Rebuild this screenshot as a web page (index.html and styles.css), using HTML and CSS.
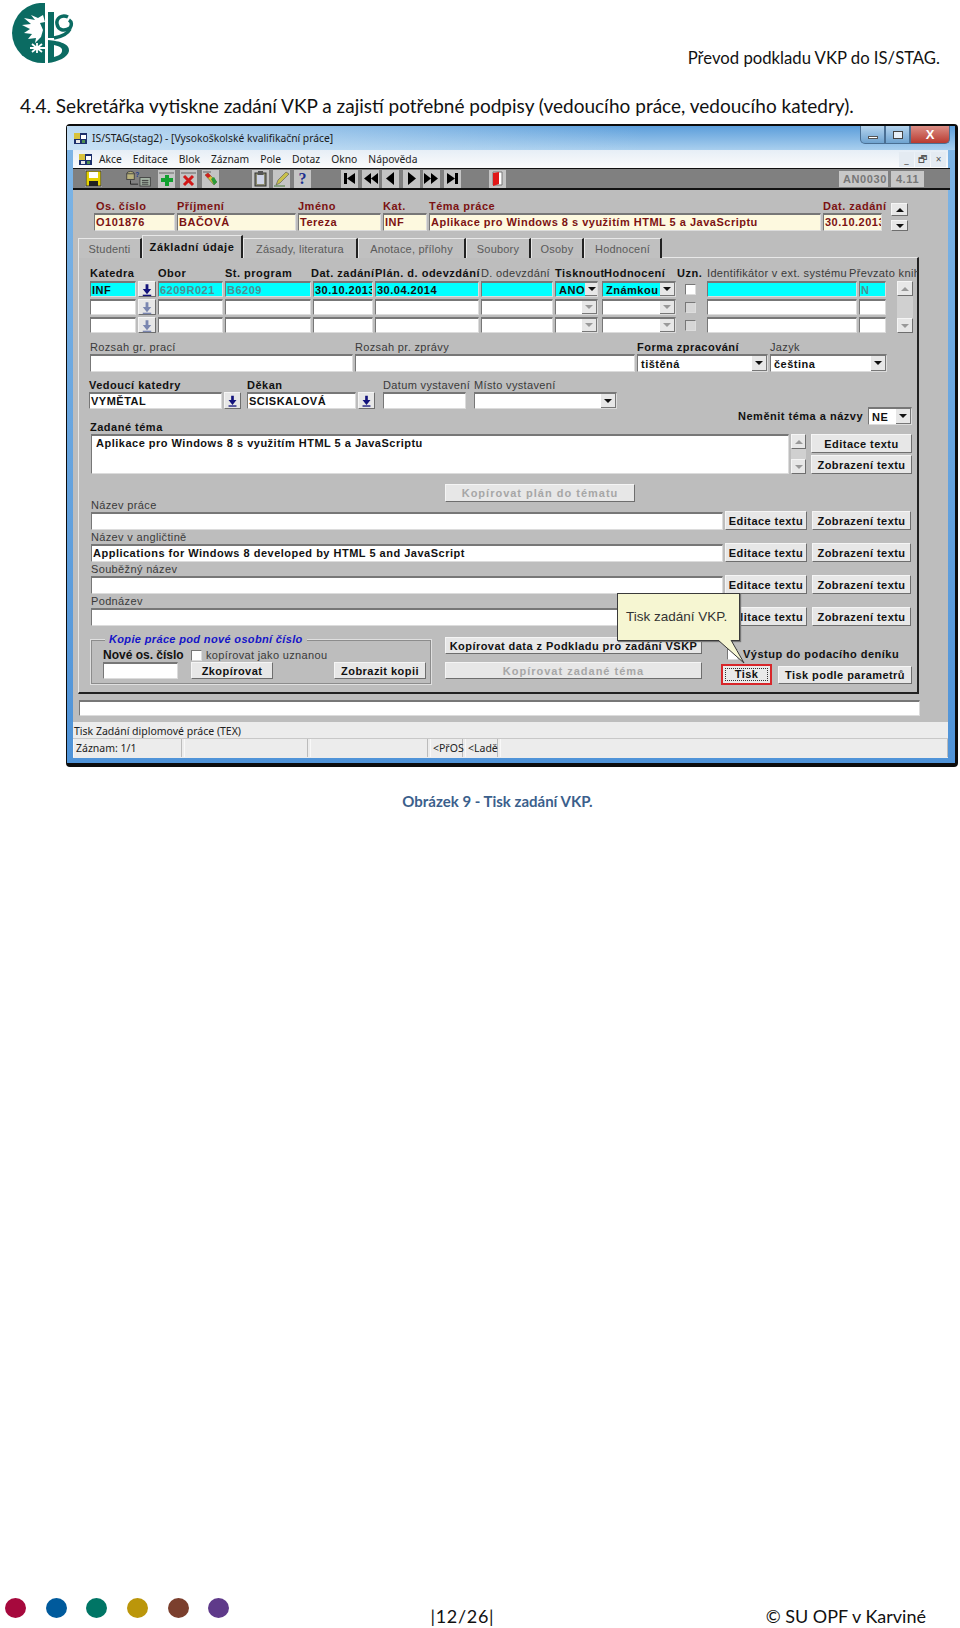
FILE: index.html
```html
<!DOCTYPE html>
<html lang="cs">
<head>
    <meta charset="UTF-8">
    <meta name="viewport" content="width=device-width, initial-scale=1.0">
    <title>Převod podkladu VKP do IS/STAG</title>
    <link rel="stylesheet" href="styles.css">
</head>
<body>
    <svg class="defs" width="0" height="0">
        <symbol id="lov" viewBox="0 0 17 17">
            <path d="M7 3h3v5h3l-4.500 5.500L4 8h3z" fill="currentColor"/>
            <rect x="4" y="14" width="9" height="1.500" fill="currentColor"/>
        </symbol>
        <symbol id="appicon" viewBox="0 0 15 15">
            <rect x="1" y="2" width="13" height="11" fill="#1c2f6b"/>
            <rect x="1" y="2" width="6" height="6" fill="#d8c23c"/>
            <rect x="8" y="4" width="5" height="4" fill="#fff"/>
            <rect x="3" y="9" width="4" height="3" fill="#e8e8e8"/>
            <rect x="9" y="9" width="3" height="3" fill="#4f8f4f"/>
        </symbol>
    </svg>

    <header class="doc-head">
        <svg class="logo" viewBox="0 0 62 62" width="62" height="62">
            <path d="M33 0A30.500 30.500 0 0 0 0 30A30.500 30.500 0 0 0 33 60Z" fill="#0b6b62"/>
            <path d="M31 12L26 15L19 12L23 17L12 15L19 21L10 22L18 26L12 30L20 31L16 36L24 35L23 40L29 34L31 27L28 20L33 19Z" fill="#fff"/>
            <path d="M18 45H33M25 40V50M20 41L30 49M30 41L20 49" stroke="#fff" stroke-width="1.800"/>
            <rect x="36" y="9" width="6" height="26" fill="#0b6b62"/>
            <path d="M56 14C50 11 44 15 45 21C46 27 52 29 58 25C60 22 60 19 57 17" fill="none" stroke="#0b6b62" stroke-width="3.500"/>
            <path d="M58 26C55 32 48 34 42 35" fill="none" stroke="#0b6b62" stroke-width="3.500"/>
            <path d="M36 37C48 38 58 41 57 48C56 54 46 59 36 60ZM42 42V54C46 53 50 51 50 48C51 45 47 43 42 42Z" fill="#0b6b62" fill-rule="evenodd"/>
        </svg>
        <p class="doc-title">Převod podkladu VKP do IS/STAG.</p>
    </header>

    <h1 class="step">4.4. Sekretářka vytiskne zadání VKP a zajistí potřebné podpisy (vedoucího práce, vedoucího katedry).</h1>

    <figure class="shot">
        <div class="window">
            <div class="titlebar">
                <svg class="app-ico" width="15" height="15"><use href="#appicon"/></svg>
                <span>IS/STAG(stag2) - [Vysokoškolské kvalifikační práce]</span>
                <div class="winbtns">
                    <span class="winbtn"><i class="ico-min"></i></span>
                    <span class="winbtn"><i class="ico-max"></i></span>
                    <span class="winbtn close">X</span>
                </div>
            </div>

            <nav class="menubar">
                <svg class="app-ico" width="15" height="15"><use href="#appicon"/></svg>
                <span>Akce</span>
                <span>Editace</span>
                <span>Blok</span>
                <span>Záznam</span>
                <span>Pole</span>
                <span>Dotaz</span>
                <span>Okno</span>
                <span>Nápověda</span>
                <div class="mdi-btns"><span>_</span><span>&#x1F5D7;&#xFE0E;</span><span>×</span></div>
            </nav>

            <div class="toolbar">
                <div class="tb-group tb-save">
                    <svg class="tb-ico" viewBox="0 0 17 17"><rect x="1" y="1" width="15" height="15" fill="#e6d200" stroke="#333"/><rect x="4" y="2" width="9" height="6" fill="#fff"/><rect x="4" y="11" width="9" height="5" fill="#222"/></svg>
                </div>
                <div class="tb-group tb-edit">
                    <svg class="tb-ico wide" viewBox="0 0 28 18"><ellipse cx="5" cy="4" rx="4" ry="2.500" fill="#b9b27a" stroke="#444"/><rect x="1" y="4" width="8" height="6" fill="#b9b27a" stroke="#444"/><text x="10" y="7" font-size="7" font-weight="bold" fill="#223a8a" font-family="Liberation Sans">?</text><path d="M5 11V15H13" stroke="#222" fill="none"/><rect x="15" y="8" width="11" height="9" fill="#a8b8a8" stroke="#444"/><path d="M17 11H24M17 13H24M17 15H24" stroke="#333"/></svg>
                    <span class="tb-btn"><svg class="tb-ico" viewBox="0 0 17 17"><path d="M1 3H16" stroke="#666"/><path d="M7 5h4v3h4v4h-4v4H7v-4H3V8h4z" fill="#12a030"/></svg></span>
                    <span class="tb-btn"><svg class="tb-ico" viewBox="0 0 17 17"><path d="M1 3H16" stroke="#666"/><path d="M4 6L13 15M13 6L4 15" stroke="#d01818" stroke-width="3"/></svg></span>
                    <span class="tb-btn"><svg class="tb-ico" viewBox="0 0 17 17"><path d="M1 2H9" stroke="#666"/><path d="M3 5L6 3L15 12L12 15Z" fill="#d8c23c" stroke="#444" stroke-width=".5"/><path d="M3 5L6 3L9 6L6 8Z" fill="#d02020"/><path d="M9 9L12 7L15 12L12 15Z" fill="#2a9a3a"/></svg></span>
                </div>
                <div class="tb-group tb-tools">
                    <span class="tb-btn"><svg class="tb-ico" viewBox="0 0 17 17"><rect x="3" y="3" width="11" height="13" fill="#8a8a72" stroke="#333"/><rect x="5" y="5" width="7" height="9" fill="#cfd4e6"/><rect x="6" y="1" width="5" height="4" fill="#555"/></svg></span>
                    <span class="tb-btn"><svg class="tb-ico" viewBox="0 0 17 17"><path d="M3 15L5 10L13 2L16 4L7 13Z" fill="#c9c04a" stroke="#555" stroke-width=".6"/><path d="M1 16H12" stroke="#4a7a3a"/></svg></span>
                    <span class="tb-btn help">?</span>
                </div>
                <div class="tb-group tb-nav">
                    <span class="tb-btn"><svg class="tb-ico" viewBox="0 0 17 17"><rect x="3" y="3" width="3" height="11"/><path d="M14 3L6 8.500L14 14Z"/></svg></span>
                    <span class="tb-btn"><svg class="tb-ico" viewBox="0 0 17 17"><path d="M9 3L2 8.500L9 14ZM16 3L9 8.500L16 14Z"/></svg></span>
                    <span class="tb-btn"><svg class="tb-ico" viewBox="0 0 17 17"><path d="M12 2L4 8.500L12 15Z"/></svg></span>
                    <span class="tb-btn"><svg class="tb-ico" viewBox="0 0 17 17"><path d="M5 2L13 8.500L5 15Z"/></svg></span>
                    <span class="tb-btn"><svg class="tb-ico" viewBox="0 0 17 17"><path d="M1 3L8 8.500L1 14ZM8 3L15 8.500L8 14Z"/></svg></span>
                    <span class="tb-btn"><svg class="tb-ico" viewBox="0 0 17 17"><rect x="11" y="3" width="3" height="11"/><path d="M3 3L11 8.500L3 14Z"/></svg></span>
                </div>
                <span class="tb-btn tb-door"><svg class="tb-ico" viewBox="0 0 17 17"><path d="M4 2H13V15H4Z" fill="#fff" stroke="#777"/><path d="M4 3L10 2V14L4 16Z" fill="#e01818"/></svg></span>
                <div class="tb-info"><span>AN0030</span><span>4.11</span></div>
            </div>

            <div class="content">
                <div class="rec-head">
                    <label>Os. číslo</label><label>Příjmení</label><label>Jméno</label><label>Kat.</label><label>Téma práce</label><label>Dat. zadání</label>
                    <div class="spin">
                        <span class="btn"><i class="tri up"></i></span>
                        <span class="btn"><i class="tri"></i></span>
                    </div>
                    <div class="field cream">O101876</div><div class="field cream">BAČOVÁ</div><div class="field cream">Tereza</div><div class="field cream">INF</div><div class="field cream">Aplikace pro Windows 8 s využitím HTML 5 a JavaScriptu</div><div class="field cream date">30.10.2013</div>
                </div>

                <div class="tabs">
                    <span class="tab t1">Studenti</span>
                    <span class="tab t2 active">Základní údaje</span>
                    <span class="tab t3">Zásady, literatura</span>
                    <span class="tab t4">Anotace, přílohy</span>
                    <span class="tab t5">Soubory</span>
                    <span class="tab t6">Osoby</span>
                    <span class="tab t7">Hodnocení</span>
                </div>

                <div class="panel">
                    <div class="study">
                        <label class="b">Katedra</label><span></span><label class="b">Obor</label><label class="b">St. program</label><label class="b lbl-date">Dat. zadání</label><label class="b">Plán. d. odevzdání</label><label>D. odevzdání</label><label class="b">Tisknout</label><label class="b lbl-hod">Hodnocení</label><label class="b lbl-uzn">Uzn.</label><label>Identifikátor v ext. systému</label><label class="lbl-prev">Převzato knih</label><span></span>
                        <div class="vscroll study-scroll">
                            <span class="btn"><i class="tri up dim"></i></span>
                            <span class="btn"><i class="tri dim"></i></span>
                        </div>

                        <div class="field cyan">INF</div>
                        <span class="btn lov"><svg width="17" height="17"><use href="#lov"/></svg></span>
                        <div class="field cyan off">6209R021</div><div class="field cyan off">B6209</div><div class="field cyan clip">30.10.2013</div><div class="field cyan">30.04.2014</div><div class="field cyan"></div>
                        <div class="field cyan select small"><span>ANO</span><b class="drop"><i class="tri"></i></b></div>
                        <div class="field cyan select mid"><span>Známkou</span><b class="drop"><i class="tri"></i></b></div>
                        <span class="check"></span>
                        <div class="field cyan"></div>
                        <div class="field cyan off prev">N</div>

                        <div class="field"></div>
                        <span class="btn lov dim"><svg width="17" height="17"><use href="#lov"/></svg></span>
                        <div class="field"></div><div class="field"></div><div class="field"></div><div class="field"></div><div class="field"></div>
                        <div class="field select small"><span></span><b class="drop"><i class="tri dim"></i></b></div>
                        <div class="field select mid"><span></span><b class="drop"><i class="tri dim"></i></b></div>
                        <span class="check dim"></span>
                        <div class="field"></div>
                        <div class="field prev"></div>

                        <div class="field"></div>
                        <span class="btn lov dim"><svg width="17" height="17"><use href="#lov"/></svg></span>
                        <div class="field"></div><div class="field"></div><div class="field"></div><div class="field"></div><div class="field"></div>
                        <div class="field select small"><span></span><b class="drop"><i class="tri dim"></i></b></div>
                        <div class="field select mid"><span></span><b class="drop"><i class="tri dim"></i></b></div>
                        <span class="check dim"></span>
                        <div class="field"></div>
                        <div class="field prev"></div>
                    </div>

                    <div class="ranges">
                        <label>Rozsah gr. prací</label><label>Rozsah pr. zprávy</label><label class="b">Forma zpracování</label><label>Jazyk</label>
                        <div class="field"></div><div class="field"></div>
                        <div class="field select"><span>tištěná</span><b class="drop"><i class="tri"></i></b></div>
                        <div class="field select"><span>čeština</span><b class="drop"><i class="tri"></i></b></div>
                    </div>

                    <div class="people">
                        <label class="b">Vedoucí katedry</label><span></span><label class="b">Děkan</label><span></span><label>Datum vystavení</label><label>Místo vystavení</label>
                        <div class="field">VYMĚTAL</div>
                        <span class="btn lov"><svg width="17" height="17"><use href="#lov"/></svg></span>
                        <div class="field">SCISKALOVÁ</div>
                        <span class="btn lov"><svg width="17" height="17"><use href="#lov"/></svg></span>
                        <div class="field issued"></div>
                        <div class="field select"><span></span><b class="drop"><i class="tri"></i></b></div>
                    </div>

                    <div class="topic-head">
                        <label class="b">Zadané téma</label>
                        <div class="keep">
                            <label class="b">Neměnit téma a názvy</label>
                            <div class="field select"><span>NE</span><b class="drop"><i class="tri"></i></b></div>
                        </div>
                    </div>

                    <div class="topic">
                        <div class="field area">Aplikace pro Windows 8 s využitím HTML 5 a JavaScriptu</div>
                        <div class="vscroll">
                            <span class="btn"><i class="tri up dim"></i></span>
                            <span class="btn"><i class="tri dim"></i></span>
                        </div>
                        <div class="topic-btns">
                            <span class="btn">Editace textu</span>
                            <span class="btn">Zobrazení textu</span>
                        </div>
                    </div>

                    <div class="title-head">
                        <label>Název práce</label>
                        <span class="btn disabled copy-plan">Kopírovat plán do tématu</span>
                    </div>
                    <div class="title-row">
                        <div class="field"></div>
                        <span class="btn">Editace textu</span><span class="btn">Zobrazení textu</span>
                    </div>
                    <label class="row-label">Název v angličtině</label>
                    <div class="title-row">
                        <div class="field">Applications for Windows 8 developed by HTML 5 and JavaScript</div>
                        <span class="btn">Editace textu</span><span class="btn">Zobrazení textu</span>
                    </div>
                    <label class="row-label">Souběžný název</label>
                    <div class="title-row">
                        <div class="field"></div>
                        <span class="btn">Editace textu</span><span class="btn">Zobrazení textu</span>
                    </div>
                    <label class="row-label">Podnázev</label>
                    <div class="title-row">
                        <div class="field"></div>
                        <span class="btn">Editace textu</span><span class="btn">Zobrazení textu</span>
                    </div>

                    <div class="bottom">
                        <div class="copybox">
                            <span class="legend">Kopie práce pod nové osobní číslo</span>
                            <div class="copy-grid">
                                <label class="b big">Nové os. číslo</label>
                                <div class="as-accepted"><span class="check"></span><label>kopírovat jako uznanou</label></div>
                                <div class="field"></div>
                                <span class="btn">Zkopírovat</span>
                                <span class="btn">Zobrazit kopii</span>
                            </div>
                        </div>
                        <div class="copy-btns">
                            <span class="btn">Kopírovat data z Podkladu pro zadání VŠKP</span>
                            <span class="btn disabled">Kopírovat zadané téma</span>
                        </div>
                        <div class="print">
                            <div class="journal"><span class="check"></span><label class="b">Výstup do podacího deníku</label></div>
                            <div class="print-btns">
                                <span class="btn focus"><em>Tisk</em></span>
                                <span class="btn">Tisk podle parametrů</span>
                            </div>
                        </div>
                    </div>
                </div>

                <div class="field hint"></div>
            </div>

            <div class="statusbar">
                <div class="status-msg">Tisk Zadání diplomové práce (TEX)</div>
                <div class="status-cells">
                    <span class="c1">Záznam: 1/1</span><span class="c2"></span><span class="c3"></span><span class="c4">&lt;PřOS</span><span class="c5">&lt;Ladě</span><span class="c6"></span>
                </div>
            </div>
        </div>

        <div class="callout">Tisk zadání VKP.</div>
        <svg class="callout-tail" width="32" height="26" viewBox="0 0 32 26">
            <path d="M1 0L27 23L14 0" fill="#f6f6d2" stroke="#333"/>
        </svg>
    </figure>

    <figcaption class="caption">Obrázek 9 - Tisk zadání VKP.</figcaption>

    <footer class="doc-foot">
        <div class="dots">
            <i class="d1"></i><i class="d2"></i><i class="d3"></i><i class="d4"></i><i class="d5"></i><i class="d6"></i>
        </div>
        <span class="page-no">|12/26|</span>
        <span class="copy">© SU OPF v Karviné</span>
    </footer>
</body>
</html>
```

FILE: styles.css
```css
* {
    margin: 0;
    padding: 0;
    box-sizing: border-box;
}
body {
    font-family: 'Lato', 'Liberation Sans', sans-serif;
    background: #fff;
    color: #111;
    width: 960px;
    height: 1628px;
    overflow: hidden;
    display: flex;
    flex-direction: column;
}
.defs {
    position: absolute;
}
.doc-head {
    height: 68px;
    display: flex;
    justify-content: space-between;
    padding: 3px 20px 0 12px;
}
.doc-title {
    font-size: 16.700px;
    line-height: 22px;
    margin-top: 44px;
}
.step {
    font-size: 19px;
    font-weight: 400;
    line-height: 24px;
    margin: 26px 0 0 20px;
    white-space: nowrap;
}
.shot {
    position: relative;
    margin: 6px 0 0 66px;
    width: 892px;
    height: 643px;
}
.window {
    height: 643px;
    border: solid #0c0c0c;
    border-width: 2px 3px 4px 1px;
    border-radius: 4px;
    background: linear-gradient(180deg, #7fb6e6, #4f93d8);
    padding: 0 7px 0 6px;
    font-family: 'Liberation Sans', Arial, sans-serif;
    font-size: 11px;
    display: flex;
    flex-direction: column;
}
.titlebar {
    height: 24px;
    margin: 0 -7px 0 -6px;
    padding-left: 6px;
    display: flex;
    align-items: center;
    gap: 4px;
    font-family: 'Noto Sans', sans-serif;
    font-size: 10.300px;
    color: #1a1a1a;
    background: linear-gradient(90deg, rgba(205, 228, 246, .85), rgba(205, 228, 246, 0) 65%), linear-gradient(180deg, #5c9edb, #a9cfee);
}
.winbtns {
    margin-left: auto;
    margin-right: 5px;
    align-self: flex-start;
    display: flex;
    height: 18px;
}
.winbtn {
    width: 25px;
    border: 1px solid #4a6f93;
    border-top: none;
    background: linear-gradient(180deg, #b5d4ee, #6fa3d0);
    display: flex;
    align-items: center;
    justify-content: center;
}
.winbtn:first-child {
    border-radius: 0 0 0 5px;
}
.winbtn.close {
    width: 40px;
    border-radius: 0 0 5px 0;
    background: linear-gradient(180deg, #dc8f86, #b93a30);
    color: #fff;
    font-weight: bold;
    font-size: 13px;
    font-family: 'Liberation Sans', sans-serif;
}
.ico-min {
    width: 10px;
    height: 3px;
    margin-top: 6px;
    background: #fff;
    border: 1px solid #555;
}
.ico-max {
    width: 10px;
    height: 8px;
    border: 1px solid #444;
    background: #e8f0f8;
}
.menubar {
    height: 18px;
    display: flex;
    align-items: center;
    gap: 11px;
    padding-left: 5px;
    font-family: 'Noto Sans', sans-serif;
    font-size: 10.300px;
    color: #222;
    background: linear-gradient(180deg, #e6eef6, #fbfbfb);
}
.menubar .app-ico {
    margin-right: -5px;
}
.mdi-btns {
    margin-left: auto;
    display: flex;
    gap: 1px;
    margin-right: 2px;
}
.mdi-btns span {
    width: 15px;
    height: 15px;
    text-align: center;
    line-height: 14px;
    color: #555;
    background: #e4ebf2;
    font-size: 10px;
}
.toolbar {
    height: 22px;
    display: flex;
    align-items: center;
    background: #808080;
    border-top: 1px solid #111;
    border-bottom: 2px solid #111;
    padding-left: 12px;
    margin-right: -2px;
}
.tb-group {
    display: flex;
    align-items: center;
}
.tb-ico {
    width: 17px;
    height: 17px;
    display: block;
}
.tb-ico.wide {
    width: 28px;
}
.tb-btn {
    width: 17px;
    height: 18px;
    background: #c4c4c4;
    display: flex;
    align-items: center;
    justify-content: center;
    flex: none;
}
.tb-save .tb-ico {
    background: #c4c4c4;
}
.tb-edit {
    margin-left: 23px;
    gap: 5px;
}
.tb-tools {
    margin-left: 33px;
    gap: 4px;
}
.help {
    color: #1c2f8f;
    font: bold 16px 'Liberation Serif', serif;
}
.tb-nav {
    margin-left: 30px;
    gap: 3.500px;
}
.tb-door {
    margin-left: 28px;
}
.tb-info {
    margin-left: auto;
    margin-right: 26px;
    display: flex;
    gap: 3px;
    font-weight: bold;
    color: #777;
    letter-spacing: .6px;
}
.tb-info span {
    height: 16px;
    line-height: 16px;
    padding: 0 4px;
    background: #c8c8c8;
    text-align: center;
}
.tb-info span:first-child {
    width: 49px;
}
.tb-info span:last-child {
    width: 33px;
}

.content {
    height: 532px;
    background: #bdbdbd;
    padding: 9px 0 0 5px;
}
label {
    display: block;
    white-space: nowrap;
    line-height: 14px;
    letter-spacing: .35px;
    color: #3a3a3a;
}
label.b {
    color: #111;
    font-weight: bold;
    letter-spacing: .5px;
}
.field {
    height: 100%;
    margin-right: 2px;
    background: #fff;
    border-top: 2px solid #777;
    border-left: 1px solid #777;
    border-right: 1px solid #dcdcdc;
    border-bottom: 1px solid #dcdcdc;
    font-weight: bold;
    color: #111;
    letter-spacing: .5px;
    padding-left: 1px;
    line-height: 14px;
    white-space: nowrap;
    overflow: hidden;
}
.cream {
    background: #fdf9df;
    color: #7c1212;
}
.cyan {
    background: #00ffff;
}
.off {
    color: #4c8f94;
}
.btn {
    display: flex;
    align-items: center;
    justify-content: center;
    background: #e7e7e7;
    border: 1px solid;
    border-color: #f5f5f5 #6e6e6e #6e6e6e #f5f5f5;
    font-weight: bold;
    color: #111;
    letter-spacing: .45px;
    white-space: nowrap;
}
.btn.disabled {
    color: #a6a6a6;
    letter-spacing: 1px;
}
.tri {
    display: block;
    width: 0;
    height: 0;
    border: 4px solid transparent;
    border-bottom: none;
    border-top: 4px solid #111;
}
.tri.up {
    border-top: none;
    border-bottom: 4px solid #111;
}
.tri.dim {
    border-top-color: #999;
}
.tri.up.dim {
    border-bottom-color: #999;
}
.check {
    display: block;
    width: 11px;
    height: 11px;
    background: #fff;
    border: 1px solid;
    border-color: #777 #ddd #ddd #777;
    flex: none;
}
.check.dim {
    background: #d6d6d6;
}
.select {
    display: flex;
    align-items: center;
    justify-content: space-between;
    padding-left: 3px;
}
.drop {
    display: flex;
    align-items: center;
    justify-content: center;
    width: 15px;
    height: 100%;
    flex: none;
    background: #e7e7e7;
    border-right: 1px solid #777;
    border-bottom: 1px solid #777;
}
.lov {
    color: #14147c;
    height: 100%;
    width: 18px;
}
.lov.dim {
    color: #7a86b0;
}
.vscroll {
    display: flex;
    flex-direction: column;
    justify-content: space-between;
    background: #d0d0d0;
}
.vscroll .btn {
    height: 15px;
}

.rec-head {
    display: grid;
    grid-template-columns: 83px 121px 85px 46px 394px 68px 17px;
    grid-template-rows: 14px 18px;
    margin-left: 16px;
}
.rec-head label {
    color: #7c1212;
    font-weight: bold;
    letter-spacing: .5px;
}
.rec-head label:nth-child(1) {
    padding-left: 2px;
}
.spin {
    grid-column: 7;
    grid-row: 1 / 3;
    display: flex;
    flex-direction: column;
    gap: 4px;
    padding-top: 4px;
}
.spin .btn {
    height: 14px;
}
.spin .btn:last-child {
    height: 11px;
}
.date {
    width: 59px;
}
.tabs {
    display: flex;
    align-items: flex-end;
    height: 22px;
    margin-top: 4px;
}
.tab {
    position: relative;
    height: 20px;
    margin-bottom: -1px;
    display: flex;
    align-items: center;
    justify-content: center;
    background: #c0c0c0;
    border-top: 1px solid #e8e8e8;
    border-left: 1px solid #e8e8e8;
    border-right: 2px solid #222;
    color: #5a5a5a;
    letter-spacing: .2px;
}
.tab.active {
    height: 23px;
    background: #bdbdbd;
    color: #111;
    font-weight: bold;
    letter-spacing: .6px;
}
.t1 { width: 64px; }
.t2 { width: 101px; }
.t3 { width: 115px; }
.t4 { width: 108px; }
.t5 { width: 65px; }
.t6 { width: 53px; }
.t7 { width: 78px; }
.panel {
    width: 841px;
    height: 437px;
    border-top: 1px solid #e8e8e8;
    border-left: 1px solid #e8e8e8;
    border-right: 2px solid #222;
    border-bottom: 2px solid #222;
    padding-top: 8px;
}
.study {
    display: grid;
    grid-template-columns: 48px 20px 67px 88px 62px 106px 74px 47px 83px 22px 152px 38px 16px;
    grid-template-rows: 13px 16px 16px 16px;
    row-gap: 2px;
    margin-left: 11px;
}
.lbl-date {
    margin-left: -2px;
}
.lbl-hod {
    margin-left: 2px;
}
.lbl-uzn {
    margin-left: -8px;
}
.lbl-prev {
    margin-left: -10px;
    width: 69px;
    overflow: hidden;
}
.study-scroll {
    grid-column: 13;
    grid-row: 2 / 5;
}
.study .check {
    margin-top: 3px;
}
.small {
    width: 43px;
}
.mid {
    width: 74px;
}
.prev {
    width: 27px;
}
.clip {
    overflow: hidden;
}
.ranges {
    display: grid;
    grid-template-columns: 265px 282px 133px 119px;
    grid-template-rows: 14px 18px;
    margin: 7px 0 0 11px;
}
.people {
    display: grid;
    grid-template-columns: 135px 23px 111px 25px 91px 145px;
    grid-template-rows: 14px 17px;
    margin: 6px 0 0 10px;
}
.people .lov {
    width: 17px;
}
.issued {
    width: 83px;
}
.topic-head {
    display: flex;
    justify-content: space-between;
    height: 27px;
    margin: -2px 5px 0 11px;
}
.topic-head > label {
    align-self: flex-end;
}
.keep {
    display: flex;
    align-items: center;
    gap: 5px;
    height: 18px;
}
.keep .field {
    width: 44px;
    margin: 0;
}
.topic {
    display: flex;
    height: 40px;
    margin-left: 12px;
}
.area {
    width: 698px;
    padding: 0 0 0 4px;
}
.topic .vscroll {
    width: 15px;
}
.topic-btns {
    margin-left: 5px;
    width: 101px;
    display: flex;
    flex-direction: column;
    justify-content: space-between;
}
.topic-btns .btn {
    height: 19px;
}
.title-head {
    display: flex;
    align-items: flex-start;
    justify-content: space-between;
    height: 28px;
    margin-top: 10px;
    padding-left: 12px;
}
.title-head label {
    align-self: flex-end;
}
.copy-plan {
    width: 190px;
    height: 18px;
    margin-right: 282px;
}
.title-row {
    display: grid;
    grid-template-columns: 634px 87px 99px;
    height: 18px;
    margin-left: 12px;
}
.title-row .btn {
    margin: -1px 5px 0 0;
    height: 19px;
}
.title-row .btn:last-child {
    margin-right: 0;
}
.row-label {
    margin-left: 12px;
    height: 14px;
}
.bottom {
    display: flex;
    align-items: flex-start;
    margin: 7px 0 0 11px;
}
.copybox {
    position: relative;
    width: 342px;
    height: 46px;
    margin-top: 6px;
    border: 1px solid #e0e0e0;
    outline: 1px solid #8c8c8c;
    outline-offset: -2px;
    padding: 8px 0 0 12px;
}
.legend {
    position: absolute;
    top: -8px;
    left: 14px;
    padding: 0 4px;
    background: #bdbdbd;
    color: #1414c8;
    font-weight: bold;
    font-style: italic;
    letter-spacing: .35px;
    line-height: 14px;
    white-space: nowrap;
}
.copy-grid {
    display: grid;
    grid-template-columns: 88px 143px 92px;
    grid-template-rows: 14px 17px;
}
label.big {
    font-size: 12px;
    letter-spacing: 0;
}
.as-accepted {
    grid-column: 2 / 4;
    display: flex;
    align-items: center;
    gap: 4px;
}
.copy-grid .field {
    width: 75px;
}
.copy-grid .btn:nth-of-type(1) {
    width: 82px;
}
.copy-btns {
    margin: 4px 0 0 13px;
    width: 257px;
    display: flex;
    flex-direction: column;
    gap: 8px;
}
.copy-btns .btn {
    height: 17px;
}
.print {
    margin-left: 19px;
    padding-top: 14px;
}
.journal {
    display: flex;
    align-items: center;
    gap: 5px;
    height: 14px;
    padding-left: 6px;
}
.print-btns {
    display: flex;
    align-items: center;
    gap: 6px;
    margin-top: 3px;
}
.focus {
    width: 51px;
    height: 21px;
    border: 2px solid #d8262a;
    background: #eaeaea;
}
.focus em {
    font-style: normal;
    width: 43px;
    height: 13px;
    line-height: 11px;
    text-align: center;
    border: 1px dotted #333;
}
.print-btns .btn:last-child {
    width: 134px;
    height: 18px;
}
.hint {
    width: 841px;
    height: 16px;
    margin: 6px 0 0 1px;
}
.statusbar {
    height: 36px;
    background: #ececec;
    font-family: 'Noto Sans', sans-serif;
    font-size: 10.500px;
    color: #222;
}
.status-msg {
    height: 17px;
    line-height: 18px;
    padding-left: 1px;
    border-bottom: 1px solid #c8c8c8;
}
.status-cells {
    display: flex;
    height: 18px;
    line-height: 18px;
    gap: 2px;
}
.status-cells span {
    border-right: 1px solid #bbb;
    border-left: 1px solid #f8f8f8;
    padding-left: 2px;
}
.c1 { width: 109px; }
.c2 { width: 124px; }
.c3 { width: 118px; }
.c4 { width: 33px; }
.c5 { width: 33px; }
.c6 { flex: 1; }

.callout {
    position: absolute;
    left: 551px;
    top: 469px;
    width: 123px;
    height: 48px;
    background: #f6f6d2;
    border: 1px solid #3a3a3a;
    box-shadow: 1px 1px 1px #777;
    font: 13.500px/46px 'Liberation Sans', sans-serif;
    color: #333;
    padding-left: 8px;
    white-space: nowrap;
}
.callout-tail {
    position: absolute;
    left: 651px;
    top: 516px;
}

.caption {
    margin-top: 24px;
    padding-left: 35px;
    text-align: center;
    color: #3b5f8c;
    font-size: 15px;
    font-weight: bold;
    line-height: 20px;
}
.doc-foot {
    margin-top: auto;
    height: 32px;
    display: flex;
    align-items: flex-start;
    padding: 0 34px 0 5px;
    font-size: 18px;
    line-height: 24px;
}
.dots {
    display: flex;
    gap: 19.700px;
    margin-top: 2px;
}
.dots i {
    width: 21px;
    height: 20px;
    border-radius: 50%;
}
.d1 { background: #a6093d; }
.d2 { background: #005a9c; }
.d3 { background: #007565; }
.d4 { background: #bb960a; }
.d5 { background: #7b3f2d; }
.d6 { background: #5f3a8a; }
.page-no {
    margin: 8px 0 0 201px;
    letter-spacing: .7px;
}
.copy {
    margin: 8px 0 0 auto;
}
```
